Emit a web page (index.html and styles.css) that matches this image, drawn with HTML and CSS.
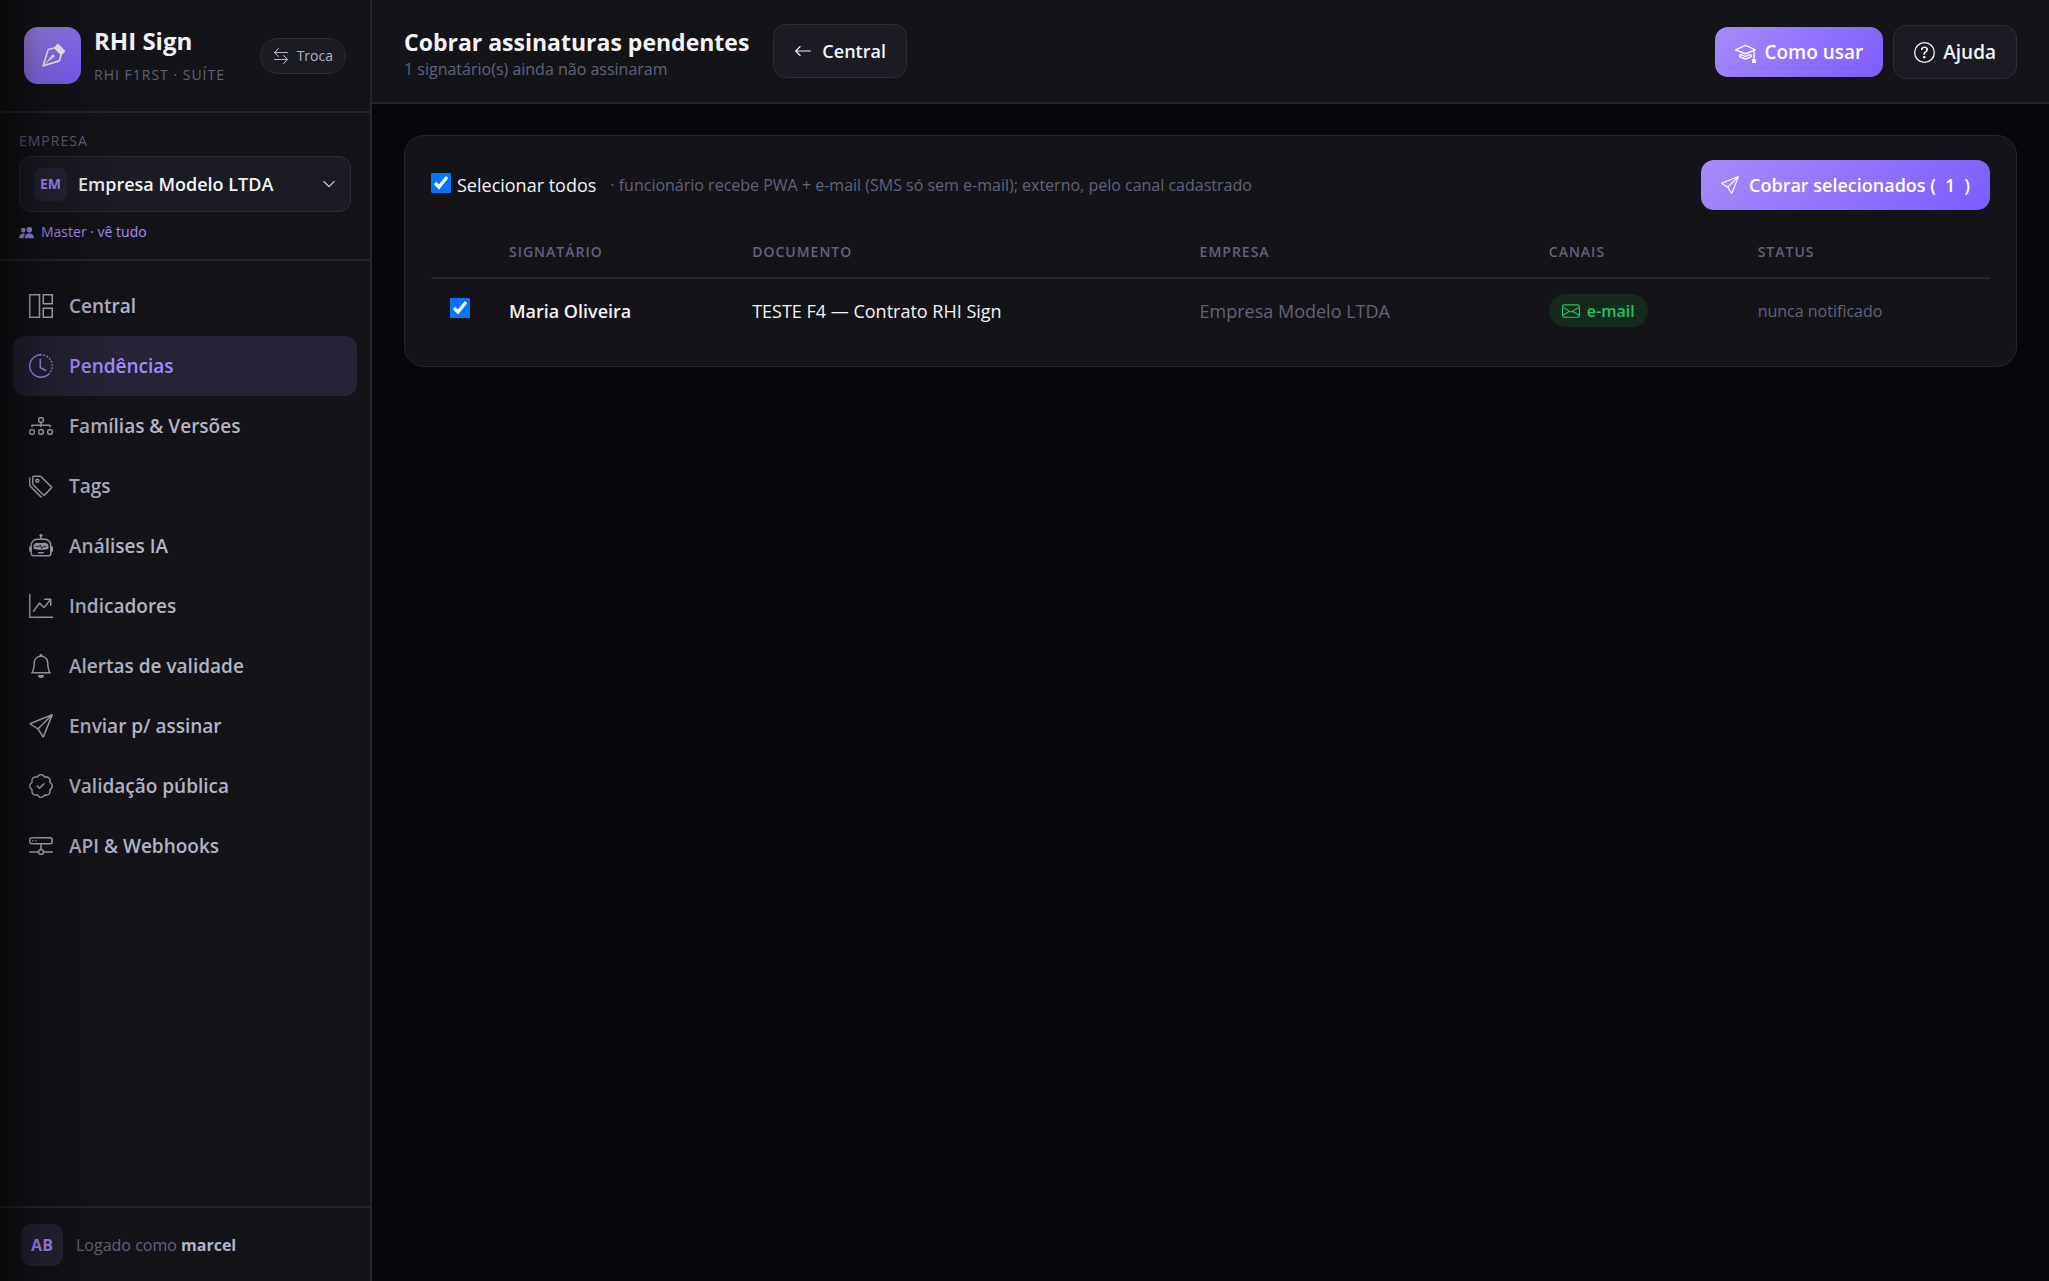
FILE: index.html
```html
<!DOCTYPE html>
<html lang="pt-BR">
  <head>
    <meta charset="UTF-8" />
    <meta name="viewport" content="width=device-width, initial-scale=1.0" />
    <title>RHI Sign - Cobrar assinaturas pendentes</title>
    <link rel="stylesheet" href="styles.css">
  </head>

  <body>
    <svg class="sprite" aria-hidden="true">
      <symbol id="i-send" viewBox="0 0 16 16"><path d="M15.854.146a.5.5 0 0 1 .11.54l-5.819 14.547a.75.75 0 0 1-1.329.124l-3.178-4.995L.643 7.184a.75.75 0 0 1 .124-1.33L15.314.037a.5.5 0 0 1 .54.11ZM6.636 10.07l2.761 4.338L14.13 2.576zm6.787-8.201L1.591 6.602l4.339 2.76z"/></symbol>
    </svg>

    <div class="app">
      <aside class="sidebar">
        <div class="brand">
          <span class="brand-logo">
            <svg viewBox="0 0 16 16"><path fill-rule="evenodd" d="M10.646.646a.5.5 0 0 1 .708 0l4 4a.5.5 0 0 1 0 .708l-1.902 1.902-.829 3.313a1.5 1.5 0 0 1-1.024 1.073L1.254 14.746 4.358 4.4A1.5 1.5 0 0 1 5.43 3.377l3.313-.828zm-1.8 2.908-3.173.793a.5.5 0 0 0-.358.342l-2.57 8.565 8.567-2.57a.5.5 0 0 0 .34-.357l.794-3.174z"/><path fill-rule="evenodd" d="M2.832 13.228 8 9a1 1 0 1 0-1-1l-4.228 5.168-.026.086z"/></svg>
          </span>
          <div class="brand-text">
            <strong>RHI Sign</strong>
            <small>RHI F1RST · SUÍTE</small>
          </div>
          <button type="button" class="btn-troca">
            <svg viewBox="0 0 16 16"><path fill-rule="evenodd" d="M1 11.5a.5.5 0 0 0 .5.5h11.793l-3.147 3.146a.5.5 0 0 0 .708.708l4-4a.5.5 0 0 0 0-.708l-4-4a.5.5 0 0 0-.708.708L13.293 11H1.5a.5.5 0 0 0-.5.5m14-7a.5.5 0 0 1-.5.5H2.707l3.147 3.146a.5.5 0 1 1-.708.708l-4-4a.5.5 0 0 1 0-.708l4-4a.5.5 0 1 1 .708.708L2.707 4H14.5a.5.5 0 0 1 .5.5"/></svg>
            Troca
          </button>
        </div>

        <div class="company">
          <span class="company-label" id="empresa-label">EMPRESA</span>
          <button type="button" class="company-select" aria-labelledby="empresa-label empresa-nome">
            <span class="chip">EM</span>
            <span class="company-name" id="empresa-nome">Empresa Modelo LTDA</span>
            <svg viewBox="0 0 16 16"><path fill-rule="evenodd" d="M1.646 4.646a.5.5 0 0 1 .708 0L8 10.293l5.646-5.647a.5.5 0 0 1 .708.708l-6 6a.5.5 0 0 1-.708 0l-6-6a.5.5 0 0 1 0-.708"/></svg>
          </button>
          <span class="company-role">
            <svg viewBox="0 0 16 16"><path d="M7 14s-1 0-1-1 1-4 5-4 5 3 5 4-1 1-1 1zm4-6a3 3 0 1 0 0-6 3 3 0 0 0 0 6m-5.784 6A2.24 2.24 0 0 1 5 13c0-1.355.68-2.75 1.936-3.72A6.3 6.3 0 0 0 5 9c-4 0-5 3-5 4s1 1 1 1zM4.500 8a2.500 2.500 0 1 0 0-5 2.500 2.500 0 0 0 0 5"/></svg>
            Master · vê tudo
          </span>
        </div>

        <nav class="menu">
          <a href="#">
            <svg viewBox="0 0 16 16"><path d="M0 0h7.500v16H0zm1 1v14h5.500V1zM9 0h7v7H9zm1 1v5h5V1zM9 9h7v7H9zm1 1v5h5v-5z" fill-rule="evenodd"/></svg>
            Central
          </a>
          <a href="#" class="active" aria-current="page">
            <svg viewBox="0 0 16 16"><path d="M8.515 1.019A7 7 0 0 0 8 1V0a8 8 0 0 1 .589.022zm2.004.45a7 7 0 0 0-.985-.299l.219-.976q.576.129 1.126.342zm1.370.710a7 7 0 0 0-.439-.270l.493-.870a8 8 0 0 1 .979.654l-.615.789a7 7 0 0 0-.418-.302zm1.834 1.790a7 7 0 0 0-.653-.796l.724-.690q.406.429.747.910zm.744 1.352a7 7 0 0 0-.214-.468l.893-.450a8 8 0 0 1 .450 1.088l-.950.313a7 7 0 0 0-.179-.483m.530 2.507a7 7 0 0 0-.100-1.025l.985-.170q.100.580.116 1.170zm-.131 1.538q.050-.254.081-.510l.993.123a8 8 0 0 1-.230 1.155l-.964-.267q.069-.247.120-.501m-.952 2.379q.276-.436.486-.908l.914.405q-.240.540-.555 1.038zm-.964 1.205q.183-.183.350-.378l.758.653a8 8 0 0 1-.401.432z"/><path d="M8 1a7 7 0 1 0 4.950 11.950l.707.707A8.001 8.001 0 1 1 8 0z"/><path d="M7.500 3a.5.5 0 0 1 .5.5v5.210l3.248 1.856a.5.5 0 0 1-.496.868l-3.500-2A.5.5 0 0 1 7 9V3.500a.5.5 0 0 1 .5-.5"/></svg>
            Pendências
          </a>
          <a href="#">
            <svg viewBox="0 0 16 16"><path fill-rule="evenodd" d="M6 3.500A1.500 1.500 0 0 1 7.500 2h1A1.500 1.500 0 0 1 10 3.500v1A1.500 1.500 0 0 1 8.500 6v1H14a.5.5 0 0 1 .5.5v1a.5.5 0 0 1-1 0V8h-5v.5a.5.5 0 0 1-1 0V8h-5v.5a.5.5 0 0 1-1 0v-1A.5.5 0 0 1 2 7h5.500V6A1.500 1.500 0 0 1 6 4.500zM8.500 5a.5.5 0 0 0 .5-.5v-1a.5.5 0 0 0-.5-.5h-1a.5.5 0 0 0-.5.5v1a.5.5 0 0 0 .5.5zM0 11.500A1.500 1.500 0 0 1 1.500 10h1A1.500 1.500 0 0 1 4 11.500v1A1.500 1.500 0 0 1 2.500 14h-1A1.500 1.500 0 0 1 0 12.500zm1.500-.5a.5.5 0 0 0-.5.5v1a.5.5 0 0 0 .5.5h1a.5.5 0 0 0 .5-.5v-1a.5.5 0 0 0-.5-.5zm4.500.5A1.500 1.500 0 0 1 7.500 10h1a1.500 1.500 0 0 1 1.500 1.500v1A1.500 1.500 0 0 1 8.500 14h-1A1.500 1.500 0 0 1 6 12.500zm1.500-.5a.5.5 0 0 0-.5.5v1a.5.5 0 0 0 .5.5h1a.5.5 0 0 0 .5-.5v-1a.5.5 0 0 0-.5-.5zm4.500.5a1.500 1.500 0 0 1 1.500-1.500h1a1.500 1.500 0 0 1 1.500 1.500v1a1.500 1.500 0 0 1-1.500 1.500h-1a1.500 1.500 0 0 1-1.500-1.500zm1.500-.5a.5.5 0 0 0-.5.5v1a.5.5 0 0 0 .5.5h1a.5.5 0 0 0 .5-.5v-1a.5.5 0 0 0-.5-.5z"/></svg>
            Famílias &amp; Versões
          </a>
          <a href="#">
            <svg viewBox="0 0 16 16"><path d="M3 2v4.586l7 7L14.586 9l-7-7zM2 2a1 1 0 0 1 1-1h4.586a1 1 0 0 1 .707.293l7 7a1 1 0 0 1 0 1.414l-4.586 4.586a1 1 0 0 1-1.414 0l-7-7A1 1 0 0 1 2 6.586z"/><path d="M5.500 5a.5.5 0 1 1 0-1 .5.5 0 0 1 0 1m0 1a1.500 1.500 0 1 0 0-3 1.500 1.500 0 0 0 0 3M1 7.086a1 1 0 0 0 .293.707L8.750 15.250l-.043.043a1 1 0 0 1-1.414 0l-7-7A1 1 0 0 1 0 7.586V3a1 1 0 0 1 1-1z"/></svg>
            Tags
          </a>
          <a href="#">
            <svg viewBox="0 0 16 16"><path d="M6 12.500a.5.5 0 0 1 .5-.5h3a.5.5 0 0 1 0 1h-3a.5.5 0 0 1-.5-.5M3 8.062C3 6.760 4.235 5.765 5.530 5.886a26.600 26.600 0 0 0 4.940 0C11.765 5.765 13 6.760 13 8.062v1.157a.93.93 0 0 1-.765.935c-.845.147-2.340.346-4.235.346s-3.390-.2-4.235-.346A.93.93 0 0 1 3 9.219zm4.542-.827a.25.250 0 0 0-.217.068l-.920.900a25 25 0 0 1-1.871-.183.250.250 0 0 0-.068.495c.550.076 1.232.149 2.020.193a.250.250 0 0 0 .189-.071l.754-.736.847 1.710a.250.250 0 0 0 .404.062l.932-.970a25 25 0 0 0 1.922-.188.250.250 0 0 0-.068-.495c-.538.074-1.207.145-1.980.189a.250.250 0 0 0-.166.076l-.754.785-.842-1.700a.250.250 0 0 0-.182-.135"/><path d="M8.500 1.866a1 1 0 1 0-1 0V3h-2A4.500 4.500 0 0 0 1 7.500V8a1 1 0 0 0-1 1v2a1 1 0 0 0 1 1v1a2 2 0 0 0 2 2h10a2 2 0 0 0 2-2v-1a1 1 0 0 0 1-1V9a1 1 0 0 0-1-1v-.5A4.500 4.500 0 0 0 10.500 3h-2zM14 7.500V13a1 1 0 0 1-1 1H3a1 1 0 0 1-1-1V7.500A3.500 3.500 0 0 1 5.500 4h5A3.500 3.500 0 0 1 14 7.500"/></svg>
            Análises IA
          </a>
          <a href="#">
            <svg viewBox="0 0 16 16"><path fill-rule="evenodd" d="M0 0h1v15h15v1H0zm10 3.500a.5.5 0 0 1 .5-.5h4a.5.5 0 0 1 .5.5v4a.5.5 0 0 1-1 0V4.900l-3.613 4.417a.5.5 0 0 1-.740.037L7.060 6.767l-3.656 5.027a.5.5 0 0 1-.808-.588l4-5.500a.5.5 0 0 1 .758-.060l2.609 2.610L13.445 4H10.500a.5.5 0 0 1-.5-.5"/></svg>
            Indicadores
          </a>
          <a href="#">
            <svg viewBox="0 0 16 16"><path d="M8 16a2 2 0 0 0 2-2H6a2 2 0 0 0 2 2M8 1.918l-.797.161A4 4 0 0 0 4 6c0 .628-.134 2.197-.459 3.742-.160.767-.376 1.566-.663 2.258h10.244c-.287-.692-.502-1.490-.663-2.258C12.134 8.197 12 6.628 12 6a4 4 0 0 0-3.203-3.920zM14.220 12c.223.447.481.801.780 1H1c.299-.199.557-.553.780-1C2.680 10.200 3 6.880 3 6c0-2.420 1.720-4.440 4.005-4.901a1 1 0 1 1 1.990 0A5 5 0 0 1 13 6c0 .880.320 4.200 1.220 6"/></svg>
            Alertas de validade
          </a>
          <a href="#">
            <svg><use href="#i-send"/></svg>
            Enviar p/ assinar
          </a>
          <a href="#">
            <svg viewBox="0 0 16 16"><path fill-rule="evenodd" d="M10.354 6.146a.5.5 0 0 1 0 .708l-3 3a.5.5 0 0 1-.708 0l-1.500-1.500a.5.5 0 1 1 .708-.708L7 8.793l2.646-2.647a.5.5 0 0 1 .708 0"/><path d="m10.273 2.513-.921-.944.715-.698.622.637.890-.011a2.890 2.890 0 0 1 2.924 2.924l-.010.890.636.622a2.890 2.890 0 0 1 0 4.134l-.637.622.011.890a2.890 2.890 0 0 1-2.924 2.924l-.890-.010-.622.636a2.890 2.890 0 0 1-4.134 0l-.622-.637-.890.011a2.890 2.890 0 0 1-2.924-2.924l.010-.890-.636-.622a2.890 2.890 0 0 1 0-4.134l.637-.622-.011-.890a2.890 2.890 0 0 1 2.924-2.924l.890.010.622-.636a2.890 2.890 0 0 1 4.134 0l-.715.698a1.890 1.890 0 0 0-2.704 0l-.920.944-1.320-.016a1.890 1.890 0 0 0-1.911 1.912l.016 1.318-.944.921a1.890 1.890 0 0 0 0 2.704l.944.920-.016 1.320a1.890 1.890 0 0 0 1.912 1.911l1.318-.016.921.944a1.890 1.890 0 0 0 2.704 0l.920-.944 1.320.016a1.890 1.890 0 0 0 1.911-1.912l-.016-1.318.944-.921a1.890 1.890 0 0 0 0-2.704l-.944-.920.016-1.320a1.890 1.890 0 0 0-1.912-1.911z"/></svg>
            Validação pública
          </a>
          <a href="#">
            <svg viewBox="0 0 16 16"><path d="M4.500 5a.5.5 0 1 0 0-1 .5.5 0 0 0 0 1M3 4.500a.5.5 0 1 1-1 0 .5.5 0 0 1 1 0"/><path d="M0 4a2 2 0 0 1 2-2h12a2 2 0 0 1 2 2v1a2 2 0 0 1-2 2H8.500v3a1.500 1.500 0 0 1 1.500 1.500h5.500a.5.5 0 0 1 0 1H10A1.500 1.500 0 0 1 8.500 14h-1A1.500 1.500 0 0 1 6 12.500H.5a.5.5 0 0 1 0-1H6A1.500 1.500 0 0 1 7.500 10V7H2a2 2 0 0 1-2-2zm1 0v1a1 1 0 0 0 1 1h12a1 1 0 0 0 1-1V4a1 1 0 0 0-1-1H2a1 1 0 0 0-1 1m6 7.500v1a.5.5 0 0 0 .5.5h1a.5.5 0 0 0 .5-.5v-1a.5.5 0 0 0-.5-.5h-1a.5.5 0 0 0-.5.5"/></svg>
            API &amp; Webhooks
          </a>
        </nav>

        <div class="user">
          <span class="avatar">AB</span>
          <span>Logado como <b>marcel</b></span>
        </div>
      </aside>

      <div class="page">
        <header class="topbar">
          <div class="title">
            <h1>Cobrar assinaturas pendentes</h1>
            <p>1 signatário(s) ainda não assinaram</p>
          </div>
          <a href="#" class="btn">
            <svg viewBox="0 0 16 16"><path fill-rule="evenodd" d="M15 8a.5.5 0 0 0-.5-.5H2.707l3.147-3.146a.5.5 0 1 0-.708-.708l-4 4a.5.5 0 0 0 0 .708l4 4a.5.5 0 0 0 .708-.708L2.707 8.500H14.500A.5.5 0 0 0 15 8"/></svg>
            Central
          </a>
          <div class="actions">
            <button type="button" class="btn btn-primary">
              <svg viewBox="0 0 16 16"><path d="M8.211 2.047a.5.5 0 0 0-.422 0l-7.500 3.500a.5.5 0 0 0 .025.917l7.500 3a.5.5 0 0 0 .372 0L14 7.140V13a1 1 0 0 0-1 1v2h3v-2a1 1 0 0 0-1-1V6.739l.686-.275a.5.5 0 0 0 .025-.917zM8 8.460 1.758 5.965 8 3.052l6.242 2.913z"/><path d="M4.176 9.032a.5.5 0 0 0-.656.327l-.5 1.700a.5.5 0 0 0 .294.605l4.500 1.800a.5.5 0 0 0 .372 0l4.500-1.800a.5.5 0 0 0 .294-.605l-.5-1.700a.5.5 0 0 0-.656-.327L8 10.466zm-.068 1.873.220-.748 3.496 1.311a.5.5 0 0 0 .352 0l3.496-1.311.220.748L8 12.460z"/></svg>
              Como usar
            </button>
            <button type="button" class="btn">
              <svg viewBox="0 0 16 16"><path d="M8 15A7 7 0 1 1 8 1a7 7 0 0 1 0 14m0 1A8 8 0 1 0 8 0a8 8 0 0 0 0 16"/><path d="M5.255 5.786a.237.237 0 0 0 .241.247h.825c.138 0 .248-.113.266-.250.090-.656.540-1.134 1.342-1.134.686 0 1.314.343 1.314 1.168 0 .635-.374.927-.965 1.371-.673.489-1.206 1.060-1.168 1.987l.003.217a.250.250 0 0 0 .250.246h.811a.250.250 0 0 0 .250-.250v-.105c0-.718.273-.927 1.010-1.486.609-.463 1.244-.977 1.244-2.056 0-1.511-1.276-2.241-2.673-2.241-1.267 0-2.655.590-2.750 2.286m1.557 5.763c0 .533.425.927 1.010.927.609 0 1.028-.394 1.028-.927 0-.552-.420-.940-1.029-.940-.584 0-1.009.388-1.009.940"/></svg>
              Ajuda
            </button>
          </div>
        </header>

        <main>
          <section class="card">
            <div class="toolbar">
              <label class="check-all"><input type="checkbox" checked /> Selecionar todos</label>
              <span class="hint">· funcionário recebe PWA + e-mail (SMS só sem e-mail); externo, pelo canal cadastrado</span>
              <button type="button" class="btn btn-primary">
                <svg><use href="#i-send"/></svg>
                <span>Cobrar selecionados (<span class="count">1</span>)</span>
              </button>
            </div>
            <table>
              <colgroup>
                <col class="c-check" /><col class="c-sign" /><col class="c-doc" /><col class="c-emp" /><col class="c-canal" /><col class="c-status" />
              </colgroup>
              <thead>
                <tr>
                  <th></th>
                  <th>SIGNATÁRIO</th>
                  <th>DOCUMENTO</th>
                  <th>EMPRESA</th>
                  <th>CANAIS</th>
                  <th>STATUS</th>
                </tr>
              </thead>
              <tbody>
                <tr>
                  <td><input type="checkbox" aria-label="Selecionar Maria Oliveira" checked /></td>
                  <td><b>Maria Oliveira</b></td>
                  <td>TESTE F4 — Contrato RHI Sign</td>
                  <td class="muted">Empresa Modelo LTDA</td>
                  <td>
                    <span class="tag">
                      <svg viewBox="0 0 16 16"><path d="M0 4a2 2 0 0 1 2-2h12a2 2 0 0 1 2 2v8a2 2 0 0 1-2 2H2a2 2 0 0 1-2-2zm2-1a1 1 0 0 0-1 1v.217l7 4.200 7-4.200V4a1 1 0 0 0-1-1zm13 2.383-4.708 2.825L15 11.105zm-.034 6.876-5.640-3.471L8 9.583l-1.326-.795-5.640 3.470A1 1 0 0 0 2 13h12a1 1 0 0 0 .966-.741M1 11.105l4.708-2.897L1 5.383z"/></svg>
                      e-mail
                    </span>
                  </td>
                  <td class="muted status">nunca notificado</td>
                </tr>
              </tbody>
            </table>
          </section>
        </main>
      </div>
    </div>
  </body>
</html>
```
FILE: styles.css
```css
* { box-sizing: border-box; }
:root {
  --bg: #07070b;
  --panel: #131318;
  --panel-2: #1a1b23;
  --line: #25252d;
  --line-2: #2d2d38;
  --text: #f4f4f7;
  --text-2: #b4b4c6;
  --muted: #62627c;
  --accent: #a78bfa;
  --accent-2: #7c5cff;
}
body { margin: 0; background: var(--bg); color: var(--text); font: 18px/26px "Segoe UI", "Open Sans", "Noto Sans", sans-serif; }
button { font: inherit; color: inherit; cursor: pointer; }
a { color: inherit; text-decoration: none; }
svg { fill: currentColor; flex: none; }
.sprite { display: none; }
.app { display: grid; grid-template-columns: 372px 1fr; min-height: 100vh; }

/* sidebar */
.sidebar { position: relative; display: flex; flex-direction: column; background: var(--panel); border-right: 2px solid var(--line); }
.sidebar::after { content: ""; position: absolute; inset: 0; pointer-events: none; background: linear-gradient(90deg, rgba(0,0,0,.5), rgba(0,0,0,.2) 40px, rgba(0,0,0,0) 120px); }
.brand { display: flex; align-items: center; gap: 13px; height: 113px; padding: 0 24px; border-bottom: 2px solid var(--line); }
.brand-logo { display: grid; place-items: center; width: 57px; height: 57px; border-radius: 14px; background: linear-gradient(135deg, var(--accent), var(--accent-2)); color: #fff; }
.brand-logo svg { width: 26px; height: 26px; }
.brand-text { flex: 1; padding-top: 4px; white-space: nowrap; }
.brand-text strong { display: block; font-size: 24px; line-height: 34px; }
.brand-text small { display: block; font-size: 14px; line-height: 34px; letter-spacing: 1px; color: var(--muted); }
.btn-troca { display: flex; align-items: center; gap: 8px; height: 36px; padding: 0 12px; border: 1px solid var(--line-2); border-radius: 18px; background: var(--panel-2); color: var(--text-2); font-size: 14px; font-weight: 500; }
.btn-troca svg { width: 16px; height: 16px; }

.company { padding: 16px 19px; height: 148px; border-bottom: 2px solid var(--line); }
.company-label { display: block; font-size: 14px; line-height: 24px; letter-spacing: 1px; color: var(--muted); }
.company-select { display: flex; align-items: center; gap: 11px; width: 100%; height: 56px; margin-top: 3px; padding: 0 14px; border: 1px solid var(--line-2); border-radius: 12px; background: var(--panel-2); font-size: 18px; font-weight: 600; }
.company-select svg { width: 14px; height: 14px; }
.company-name { flex: 1; text-align: left; }
.chip { display: grid; place-items: center; width: 33px; height: 33px; border-radius: 8px; background: #272335; color: var(--accent); font-size: 14px; font-weight: 700; }
.company-role { display: flex; align-items: center; gap: 7px; margin-top: 7px; color: var(--accent); font-size: 14px; }
.company-role svg { width: 15px; height: 15px; }

.menu { flex: 1; padding: 15px 13px; }
.menu a { display: flex; align-items: center; gap: 16px; height: 60px; padding: 0 16px; border-radius: 12px; color: var(--text-2); font-size: 19px; font-weight: 600; }
.menu a.active { background: #262336; color: var(--accent); }
.menu svg { width: 24px; height: 24px; }

.user { display: flex; align-items: center; gap: 13px; height: 75px; padding: 0 21px; border-top: 2px solid var(--line); color: var(--muted); font-size: 16px; }
.user b { color: var(--text-2); }
.avatar { display: grid; place-items: center; width: 42px; height: 42px; border-radius: 10px; background: #262336; color: var(--accent); font-size: 16px; font-weight: 700; }

/* topbar */
.topbar { display: flex; align-items: center; height: 104px; padding: 0 32px; background: var(--panel); border-bottom: 2px solid var(--line); }
.title { margin-right: 24px; padding-top: 5px; white-space: nowrap; }
.title h1 { margin: 0; font-size: 23px; line-height: 30px; }
.title p { margin: 0; font-size: 16px; line-height: 24px; color: var(--muted); }
.actions { display: flex; align-items: center; gap: 10px; margin-left: auto; padding-top: 2px; }
.btn { display: inline-flex; align-items: center; gap: 10px; height: 54px; padding: 0 20px; border: 1px solid var(--line-2); border-radius: 13px; background: var(--panel-2); font-size: 18px; font-weight: 600; white-space: nowrap; }
.btn svg { width: 18px; height: 18px; }
.btn-primary { height: 50px; border: 0; background: linear-gradient(135deg, var(--accent), var(--accent-2)); color: #fff; }
.actions .btn { gap: 8px; font-size: 19px; }
.actions svg { width: 21px; height: 21px; }

/* card */
main { padding: 31px 32px; }
.card { padding: 24px 26px; border: 1px solid var(--line); border-radius: 20px; background: var(--panel); }
.toolbar { display: flex; align-items: center; }
.toolbar .btn { margin-left: auto; }
.hint { margin-left: 14px; color: var(--muted); font-size: 16px; }
.count { margin: 0 9px; }
input[type="checkbox"] { display: block; width: 20px; height: 20px; margin: 0 0 5px; accent-color: #0075ff; }
.check-all { display: flex; align-items: center; gap: 6px; }
table { width: 100%; border-collapse: collapse; table-layout: fixed; }
th { height: 68px; padding: 18px 0 2px; text-align: left; color: var(--muted); font-size: 14px; font-weight: 600; letter-spacing: 1px; border-bottom: 2px solid var(--line); }
td { height: 64px; padding: 0; }
td:first-child { padding-left: 19px; }
td b { font-weight: 600; }
.c-check { width: 5%; }
.c-sign { width: 15.6%; }
.c-doc { width: 28.7%; }
.c-emp { width: 22.4%; }
.c-canal { width: 13.4%; }
.muted { color: var(--muted); }
.status { font-size: 16px; }
.tag { display: inline-flex; align-items: center; gap: 7px; height: 33px; padding: 0 13px; border-radius: 17px; background: #15291f; color: #22c55e; font-size: 16px; font-weight: 600; }
.tag svg { width: 18px; height: 18px; }
```
